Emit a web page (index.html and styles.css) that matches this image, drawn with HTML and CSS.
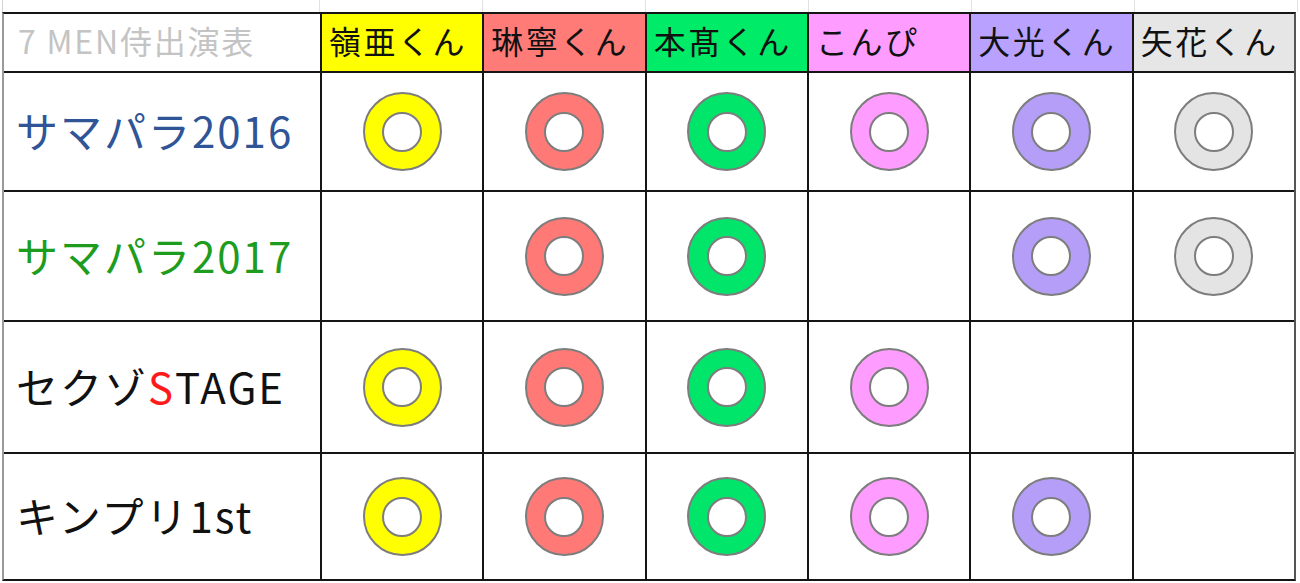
FILE: index.html
```html
<!DOCTYPE html>
<html lang="ja">
<head>
<meta charset="utf-8">
<link rel="stylesheet" href="styles.css">
</head>
<body>
<div class="sheet">
  <div class="strip">
    <div></div><div></div><div></div><div></div><div></div><div></div><div></div>
  </div>
  <div class="table">
    <div class="cell head title">7 MEN侍出演表</div>
    <div class="cell head c-yellow">嶺亜くん</div>
    <div class="cell head c-red">琳寧くん</div>
    <div class="cell head c-green">本髙くん</div>
    <div class="cell head c-pink">こんぴ</div>
    <div class="cell head c-purple">大光くん</div>
    <div class="cell head c-gray">矢花くん</div>

    <div class="cell label blue">サマパラ2016</div>
    <div class="cell mark"><span class="ring r-yellow"></span></div>
    <div class="cell mark"><span class="ring r-red"></span></div>
    <div class="cell mark"><span class="ring r-green"></span></div>
    <div class="cell mark"><span class="ring r-pink"></span></div>
    <div class="cell mark"><span class="ring r-purple"></span></div>
    <div class="cell mark"><span class="ring r-gray"></span></div>

    <div class="cell label green">サマパラ2017</div>
    <div class="cell mark"></div>
    <div class="cell mark"><span class="ring r-red"></span></div>
    <div class="cell mark"><span class="ring r-green"></span></div>
    <div class="cell mark"></div>
    <div class="cell mark"><span class="ring r-purple"></span></div>
    <div class="cell mark"><span class="ring r-gray"></span></div>

    <div class="cell label">セクゾ<span class="red-s">S</span>TAGE</div>
    <div class="cell mark"><span class="ring r-yellow"></span></div>
    <div class="cell mark"><span class="ring r-red"></span></div>
    <div class="cell mark"><span class="ring r-green"></span></div>
    <div class="cell mark"><span class="ring r-pink"></span></div>
    <div class="cell mark"></div>
    <div class="cell mark"></div>

    <div class="cell label">キンプリ1st</div>
    <div class="cell mark"><span class="ring r-yellow"></span></div>
    <div class="cell mark"><span class="ring r-red"></span></div>
    <div class="cell mark"><span class="ring r-green"></span></div>
    <div class="cell mark"><span class="ring r-pink"></span></div>
    <div class="cell mark"><span class="ring r-purple"></span></div>
    <div class="cell mark"></div>
  </div>
</div>
</body>
</html>
```

FILE: styles.css
```css
html, body {
  margin: 0;
  padding: 0;
  background: #ffffff;
}

body {
  width: 1300px;
  height: 583px;
  overflow: hidden;
  font-family: "Noto Sans CJK JP", "Noto Sans", sans-serif;
}

.sheet {
  padding-left: 2px;
}

.strip {
  display: grid;
  grid-template-columns: 318px repeat(6, 1fr);
  width: 1296px;
  height: 12px;
}

.strip div {
  border-right: 1px solid #e2e2e2;
}

.strip div:first-child {
  border-left: 1px solid #d4d4d4;
}

.table {
  display: grid;
  grid-template-columns: 316px repeat(6, 1fr);
  grid-template-rows: 57px 117px 128px 130px 125px;
  gap: 2px;
  width: 1294px;
  box-sizing: border-box;
  background: #151515;
  border: 2px solid #151515;
  border-left-color: #9a9a9a;
  border-right-color: #555555;
}

.cell {
  background: #ffffff;
  display: flex;
  align-items: center;
  overflow: hidden;
  white-space: nowrap;
}

.head {
  font-size: 32px;
  padding-left: 7px;
  padding-bottom: 5px;
  color: #111111;
  letter-spacing: 2.5px;
}

.title {
  color: #c4c4c4;
  padding-left: 14px;
  letter-spacing: 1.8px;
}

.c-yellow { background: #ffff00; }
.c-red { background: #ff7b77; }
.c-green { background: #00eb68; }
.c-pink { background: #ff9cff; }
.c-purple { background: #b9a1ff; }
.c-gray { background: #e6e6e6; }

.label {
  font-size: 42px;
  padding-left: 12px;
  padding-bottom: 4px;
  color: #111111;
  letter-spacing: 2px;
}

.label.blue { color: #2f5597; }
.label.green { color: #1d9c1d; }
.red-s { color: #ff1a1a; }

.mark {
  justify-content: center;
}

.ring {
  width: 75px;
  height: 75px;
  border: 2.5px solid #7d7d7d;
  border-radius: 50%;
  display: flex;
  align-items: center;
  justify-content: center;
}

.ring::after {
  content: "";
  width: 36px;
  height: 36px;
  border: 2.5px solid #7d7d7d;
  border-radius: 50%;
  background: #ffffff;
}

.r-yellow { background: #ffff00; }
.r-red { background: #ff7a76; }
.r-green { background: #00e56a; }
.r-pink { background: #ff9cff; }
.r-purple { background: #b49ef8; }
.r-gray { background: #e4e4e4; }
```
